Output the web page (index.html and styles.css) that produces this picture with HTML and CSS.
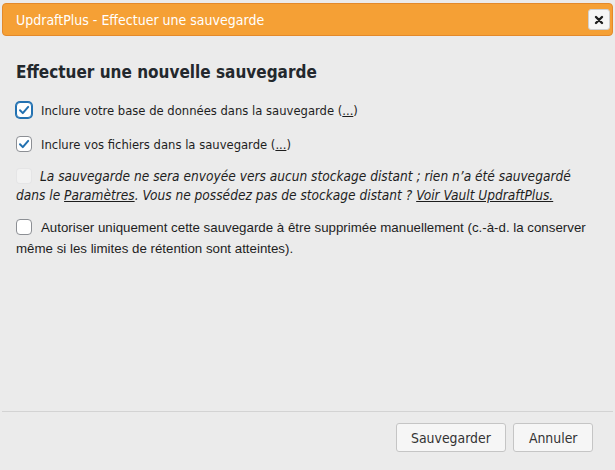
FILE: index.html
```html
<!DOCTYPE html>
<html lang="fr">
<head>
<meta charset="utf-8">
<title>UpdraftPlus</title>
<link rel="stylesheet" href="styles.css">
</head>
<body>
<div class="dialog">
  <div class="titlebar">
    <span class="title">UpdraftPlus - Effectuer une sauvegarde</span>
    <button class="close" type="button" aria-label="Fermer">
      <svg width="10" height="10" viewBox="0 0 10 10"><path d="M2 2 L8 8 M8 2 L2 8" stroke="#1e1e1e" stroke-width="2.4" stroke-linecap="round"/></svg>
    </button>
  </div>
  <div class="content">
    <h2 class="heading">Effectuer une nouvelle sauvegarde</h2>
    <p class="opt opt-db"><span class="cb checked focused"><svg width="14" height="14" viewBox="0 0 14 14"><path d="M3 7.3 L5.8 10.1 L11.2 3.9" fill="none" stroke="#2271b1" stroke-width="2" stroke-linecap="round" stroke-linejoin="round"/></svg></span>Inclure votre base de données dans la sauvegarde (<a class="more" href="#">...</a>)</p>
    <p class="opt opt-files"><span class="cb checked"><svg width="14" height="14" viewBox="0 0 14 14"><path d="M3 7.3 L5.8 10.1 L11.2 3.9" fill="none" stroke="#2271b1" stroke-width="2" stroke-linecap="round" stroke-linejoin="round"/></svg></span>Inclure vos fichiers dans la sauvegarde (<a class="more" href="#">...</a>)</p>
    <p class="opt opt-remote"><span class="cb disabled"></span>La sauvegarde ne sera envoyée vers aucun stockage distant ; rien n’a été sauvegardé<br>dans le <a class="link" href="#">Paramètres</a>. Vous ne possédez pas de stockage distant ? <a class="link" href="#">Voir Vault UpdraftPlus.</a></p>
    <p class="opt opt-manual"><span class="cb"></span>Autoriser uniquement cette sauvegarde à être supprimée manuellement (c.-à-d. la conserver<br>même si les limites de rétention sont atteintes).</p>
  </div>
  <div class="buttonpane">
    <button class="btn" type="button">Sauvegarder</button>
    <button class="btn" type="button">Annuler</button>
  </div>
</div>
</body>
</html>
```

FILE: styles.css
```css
html, body {
  margin: 0;
  height: 100%;
}

body {
  background: #ebebeb;
  font-family: "DejaVu Sans Condensed", "DejaVu Sans", sans-serif;
  font-stretch: condensed;
  color: #1e1e1e;
}

.dialog {
  height: 470px;
  box-sizing: border-box;
  padding: 3px 2px 0;
  display: flex;
  flex-direction: column;
}

.titlebar {
  height: 33px;
  box-sizing: border-box;
  background: #f5a035;
  border: 1px solid #e3892b;
  border-radius: 4px;
  display: flex;
  align-items: center;
  justify-content: space-between;
  padding: 0 2px 0 13px;
  color: #ffffff;
  font-size: 14px;
}

.close {
  width: 22px;
  height: 21px;
  box-sizing: border-box;
  padding: 0;
  background: #f6f6f6;
  border: 1px solid #cfcfcf;
  border-radius: 3px;
  display: flex;
  align-items: center;
  justify-content: center;
}

.content {
  flex: 1;
  padding: 0 14px;
}

.heading {
  margin: 25px 0 0;
  font-size: 17px;
  line-height: 22px;
  font-weight: bold;
  color: #23282d;
}

.opt {
  margin: 0;
  font-size: 12.9px;
  line-height: 20px;
  color: #1e1e1e;
}

.opt-db {
  margin-top: 18px;
}

.opt-files {
  margin-top: 14px;
}

.opt-remote {
  margin-top: 12px;
  font-style: italic;
  font-size: 13.6px;
  line-height: 19px;
}

.opt-manual {
  margin-top: 12px;
  font-family: "Liberation Sans", Arial, sans-serif;
  font-stretch: normal;
  font-size: 13.3px;
  line-height: 21px;
}

.cb {
  display: inline-flex;
  align-items: center;
  justify-content: center;
  width: 16px;
  height: 16px;
  box-sizing: border-box;
  border: 1px solid #8c8f94;
  border-radius: 4px;
  background: #ffffff;
  vertical-align: middle;
  margin: -3px 9px 0 0;
}

.cb.focused {
  border-color: #2271b1;
  box-shadow: 0 0 0 1px #2271b1;
}

.cb.disabled {
  background: rgba(255, 255, 255, 0.35);
  border-color: rgba(220, 220, 222, 0.6);
  margin-right: 8px;
}

.more,
.link {
  color: inherit;
  text-decoration: underline;
}

.buttonpane {
  border-top: 1px solid #d3d3d3;
  padding: 11px 20px 18px 0;
  display: flex;
  justify-content: flex-end;
  gap: 7px;
}

.btn {
  height: 29px;
  box-sizing: border-box;
  padding: 0 14.5px;
  font-family: "DejaVu Sans Condensed", "DejaVu Sans", sans-serif;
  font-stretch: condensed;
  font-size: 13.9px;
  color: #333333;
  background: #f6f6f6;
  border: 1px solid #c5c5c5;
  border-radius: 3px;
}
```
